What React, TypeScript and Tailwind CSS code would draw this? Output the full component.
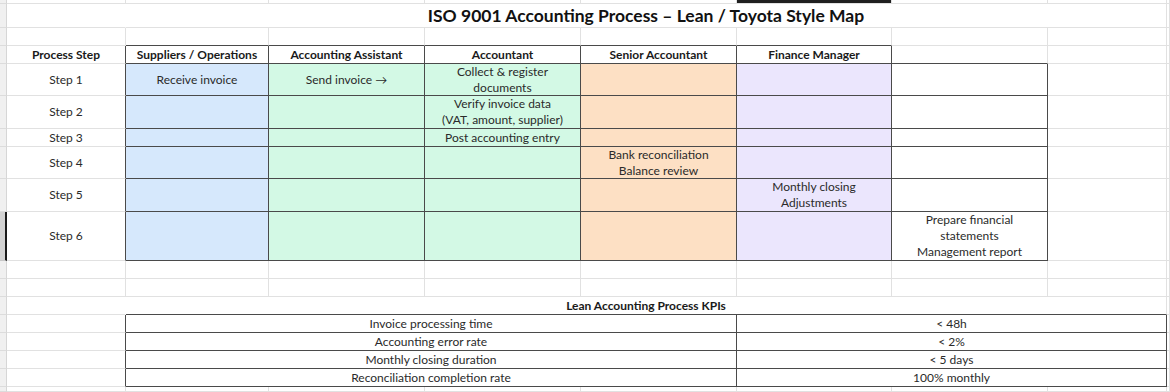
import React from "react";

type Cell = {
  span?: 1 | 3 | 4 | 7;
  text?: string;
  bold?: boolean;
  bg?: string;
  rd?: boolean; // dark right border
  bd?: boolean; // dark bottom border
  nr?: boolean; // no right gridline
};

const spanClass: Record<number, string> = {
  1: "",
  3: "col-span-3",
  4: "col-span-4",
  7: "col-span-7",
};

// light empty cells helper
const blank = (n: number): Cell[] => Array.from({ length: n }, () => ({}));

const laneBg = [
  "bg-[#d6e8fc]",
  "bg-[#d3f9e5]",
  "bg-[#d3f9e5]",
  "bg-[#fde0c4]",
  "bg-[#ebe6fd]",
  "bg-white",
];

const steps: { label: string; notes: Record<number, string> }[] = [
  {
    label: "Step 1",
    notes: {
      0: "Receive invoice",
      1: "Send invoice →",
      2: "Collect & register\ndocuments",
    },
  },
  { label: "Step 2", notes: { 2: "Verify invoice data\n(VAT, amount, supplier)" } },
  { label: "Step 3", notes: { 2: "Post accounting entry" } },
  { label: "Step 4", notes: { 3: "Bank reconciliation\nBalance review" } },
  { label: "Step 5", notes: { 4: "Monthly closing\nAdjustments" } },
  {
    label: "Step 6",
    notes: { 5: "Prepare financial\nstatements\nManagement report" },
  },
];

const headers = [
  "Suppliers / Operations",
  "Accounting Assistant",
  "Accountant",
  "Senior Accountant",
  "Finance Manager",
];

const kpis = [
  ["Invoice processing time", "< 48h"],
  ["Accounting error rate", "< 2%"],
  ["Monthly closing duration", "< 5 days"],
  ["Reconciliation completion rate", "100% monthly"],
];

// every row lists the cells after the row-header strip, ending with the 3px tail column
const rows: { cells: Cell[]; selected?: boolean }[] = [
  {
    cells: [
      {}, {}, {}, {}, {},
      { bg: "bg-[#1f1f1f]" },
      {}, {}, {},
    ],
  },
  {
    cells: [
      { nr: true },
      {
        span: 7,
        text: "ISO 9001 Accounting Process – Lean / Toyota Style Map",
        bold: true,
      },
      {},
    ],
  },
  {
    cells: [
      {},
      ...headers.map(() => ({ bd: true })),
      {}, {}, {},
    ],
  },
  {
    cells: [
      { text: "Process Step", bold: true, rd: true },
      ...headers.map((h) => ({ text: h, bold: true, rd: true, bd: true })),
      { bd: true },
      {},
      {},
    ],
  },
  ...steps.map((s, i) => ({
    selected: i === 5,
    cells: [
      { text: s.label, rd: true },
      ...laneBg.map((bg, lane) => ({
        text: s.notes[lane],
        bg,
        rd: true,
        bd: true,
      })),
      {},
      {},
    ] as Cell[],
  })),
  { cells: blank(9) },
  { cells: blank(9) },
  {
    cells: [
      { nr: true },
      { span: 7, text: "Lean Accounting Process KPIs", bold: true, bd: true },
      {},
    ],
  },
  ...kpis.map(([name, target]) => ({
    cells: [
      { rd: true },
      { span: 4, text: name, rd: true, bd: true },
      { span: 3, text: target, rd: true, bd: true },
      {},
    ] as Cell[],
  })),
  { cells: blank(9) },
];

const SheetCell: React.FC<{ cell: Cell; title?: boolean }> = ({ cell, title }) => {
  const right = cell.nr
    ? "border-r-transparent"
    : cell.rd
    ? "border-r-[#4a4a4a]"
    : "border-r-[#e1e1e1]";
  const bottom = cell.bd ? "border-b-[#4a4a4a]" : "border-b-[#e1e1e1]";

  return (
    <div
      className={`
        flex items-center justify-center overflow-visible
        border-r border-b ${right} ${bottom}
        ${spanClass[cell.span ?? 1]}
        ${cell.bg ?? "bg-white"}
      `}
    >
      {cell.text && (
        <span
          className={`
            whitespace-pre-line text-center
            ${
              title
                ? "text-[17.5px] leading-[20px] font-bold text-[#111]"
                : cell.bold
                ? "text-[12px] leading-[16px] font-bold text-[#1a1a1a]"
                : "text-[12px] leading-[16px] text-[#2a2a2a]"
            }
          `}
        >
          {cell.text}
        </span>
      )}
    </div>
  );
};

export default function App() {
  return (
    <div className="w-[1170px] h-[392px] overflow-hidden bg-white font-['Lato','Liberation_Sans',sans-serif]">
      <div className="grid grid-cols-[7px_119px_143px_156px_156px_156px_155px_156px_119px_3px] grid-rows-[4px_24px_18px_18px_32px_33px_18px_32px_33px_49px_18px_18px_18px_18px_18px_18px_18px_5px]">
        {rows.map((row, r) => (
          <React.Fragment key={r}>
            {/* row header strip on the far left */}
            <div
              className={
                row.selected
                  ? "bg-[#d2d2d2] border-r-2 border-r-[#1a1a1a] border-b border-b-[#c8c8c8]"
                  : "bg-[#f0f0f0] border-r border-r-[#d6d6d6] border-b border-b-[#dcdcdc]"
              }
            />
            {row.cells.map((cell, c) => (
              <SheetCell key={c} cell={cell} title={r === 1 && c === 1} />
            ))}
          </React.Fragment>
        ))}
      </div>
    </div>
  );
}
